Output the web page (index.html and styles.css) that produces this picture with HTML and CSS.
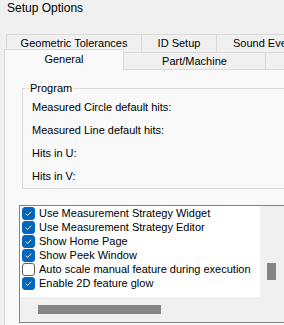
FILE: index.html
```html
<!DOCTYPE html>
<html lang="en">
<head>
  <meta charset="UTF-8" />
  <title>Setup Options</title>
  <link rel="stylesheet" href="styles.css">
</head>
<body>
  <div class="title">Setup Options</div>

  <div class="tab-row back">
    <div class="tab geo">Geometric Tolerances</div>
    <div class="tab id">ID Setup</div>
    <div class="tab sound">Sound Events</div>
  </div>
  <div class="tab-row front">
    <div class="tab general active">General</div>
    <div class="tab part">Part/Machine</div>
    <div class="tab more"></div>
  </div>

  <div class="panel">
    <fieldset class="group">
      <legend>Program</legend>
      <div class="field-row">Measured Circle default hits:</div>
      <div class="field-row">Measured Line default hits:</div>
      <div class="field-row">Hits in U:</div>
      <div class="field-row">Hits in V:</div>
    </fieldset>

    <div class="listbox">
      <div class="list">
        <div class="item"><span class="check on"><svg viewBox="0 0 13 13"><path d="M3.3 6.7 L5.4 8.8 L9.8 4.4"/></svg></span>Use Measurement Strategy Widget</div>
        <div class="item"><span class="check on"><svg viewBox="0 0 13 13"><path d="M3.3 6.7 L5.4 8.8 L9.8 4.4"/></svg></span>Use Measurement Strategy Editor</div>
        <div class="item"><span class="check on"><svg viewBox="0 0 13 13"><path d="M3.3 6.7 L5.4 8.8 L9.8 4.4"/></svg></span>Show Home Page</div>
        <div class="item"><span class="check on"><svg viewBox="0 0 13 13"><path d="M3.3 6.7 L5.4 8.8 L9.8 4.4"/></svg></span>Show Peek Window</div>
        <div class="item"><span class="check"></span>Auto scale manual feature during execution</div>
        <div class="item"><span class="check on"><svg viewBox="0 0 13 13"><path d="M3.3 6.7 L5.4 8.8 L9.8 4.4"/></svg></span>Enable 2D feature glow</div>
      </div>
      <div class="vscroll"><div class="vthumb"></div></div>
      <div class="hscroll"><div class="hthumb"></div></div>
    </div>
  </div>
</body>
</html>
```

FILE: styles.css
```css
html, body {
  width: 284px;
  height: 325px;
  overflow: hidden;
}
body {
  margin: 0;
  background: #f0f0f0;
  font-family: "Liberation Sans", Arial, sans-serif;
  font-size: 11px;
  color: #000;
}
.title {
  height: 34px;
  padding-left: 7px;
  font-size: 12px;
  line-height: 16px;
}
.tab-row {
  display: flex;
  white-space: nowrap;
}
.tab-row.back {
  margin-left: 6px;
  height: 18px;
}
.tab-row.front {
  margin-left: 4px;
  height: 17px;
}
.tab {
  box-sizing: border-box;
  flex: none;
  border-top: 1px solid #d9d9d9;
  border-left: 1px solid #d9d9d9;
  text-align: center;
  line-height: 16px;
  overflow: hidden;
}
.back .geo { width: 135px; }
.back .id { width: 75px; }
.back .sound {
  width: 100px;
  text-align: left;
  padding-left: 16px;
}
.front .part { width: 141px; }
.front .more { width: 40px; }
.tab.active {
  position: relative;
  z-index: 1;
  width: 120px;
  height: 21px;
  margin-top: -3px;
  border-right: 1px solid #d9d9d9;
  background: #f9f9f9;
  line-height: 18px;
}
.tab.active + .tab {
  border-left: none;
}
.panel {
  box-sizing: border-box;
  width: 400px;
  height: 256px;
  margin-left: 4px;
  border-top: 1px solid #d9d9d9;
  border-left: 1px solid #d9d9d9;
  background: #f9f9f9;
  overflow: hidden;
}
.group {
  margin: 10px 0 0 17px;
  padding: 0 0 0 9px;
  border: 1px solid #dcdcdc;
  min-width: 0;
}
.group legend {
  padding: 0 1px;
  margin-left: -3px;
  line-height: 16px;
}
.field-row {
  height: 23px;
  line-height: 23px;
}
.listbox {
  display: grid;
  grid-template-columns: 240px 1fr;
  grid-template-rows: 91px 25px;
  width: 320px;
  margin: 16px 0 0 14px;
  border: 1px solid #828282;
}
.list {
  background: #fff;
  white-space: nowrap;
  overflow: hidden;
}
.item {
  display: flex;
  align-items: center;
  gap: 4px;
  height: 14px;
  padding-left: 2px;
}
.check {
  box-sizing: border-box;
  flex: none;
  width: 13px;
  height: 13px;
  border: 1px solid #5f5f5f;
  border-radius: 3px;
  background: #fff;
}
.check.on {
  border-color: #0067c0;
  background: #0067c0;
}
.check svg {
  display: block;
  width: 11px;
  height: 11px;
  fill: none;
  stroke: #fff;
  stroke-width: 1.1;
}
.vscroll {
  background: #f0f0f0;
}
.vthumb {
  width: 9px;
  height: 17px;
  margin: 57px 0 0 7px;
  background: #858585;
}
.hscroll {
  grid-column: 1 / span 2;
  background: #f0f0f0;
}
.hthumb {
  width: 123px;
  height: 9px;
  margin: 8px 0 0 18px;
  background: #858585;
}
```
